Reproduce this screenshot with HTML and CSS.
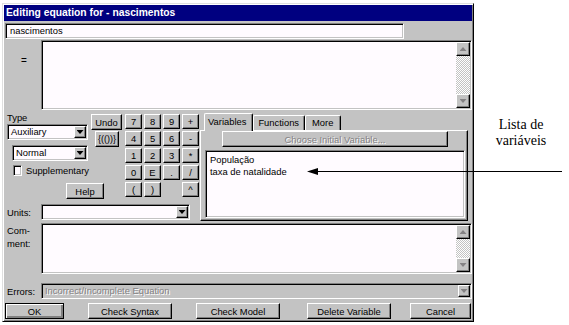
FILE: index.html
```html
<!DOCTYPE html>
<html lang="pt">
  <head>
    <meta charset="UTF-8" />
    <title>Editing equation for - nascimentos</title>
    <link rel="stylesheet" href="styles.css">
  </head>
  <body>
    <div class="page">
      <div class="dialog">
        <div class="titlebar">Editing equation for - nascimentos</div>
        <div class="dialog-body">
          <div class="field name-field">nascimentos</div>
          <!-- equation -->
          <div class="row eq-row">
            <div class="row-label eq-label">=</div>
            <div class="field textbox">
              <div class="scrollbar">
                <span class="sbtn"><i class="tri up"></i></span>
                <span class="sbtn"><i class="tri down"></i></span>
              </div>
            </div>
          </div>
          <!-- type, keypad and tabs -->
          <div class="mid">
            <div class="left">
              <div class="controls">
                <div class="type-col">
                  <div class="type-label">Type</div>
                  <div class="field combo aux">
                    <span class="combo-text">Auxiliary</span>
                    <span class="drop"><i class="tri down dark"></i></span>
                  </div>
                  <div class="field combo normal">
                    <span class="combo-text">Normal</span>
                    <span class="drop"><i class="tri down dark"></i></span>
                  </div>
                  <div class="check-row">
                    <span class="field checkbox"></span>
                    <span>Supplementary</span>
                  </div>
                  <div class="btn help-btn">Help</div>
                </div>
                <div class="undo-col">
                  <div class="btn undo-btn">Undo</div>
                  <div class="btn wrap-btn">{(())}</div>
                </div>
                <div class="keypad">
                  <div class="btn">7</div>
                  <div class="btn">8</div>
                  <div class="btn">9</div>
                  <div class="btn">+</div>
                  <div class="btn">4</div>
                  <div class="btn">5</div>
                  <div class="btn">6</div>
                  <div class="btn">-</div>
                  <div class="btn">1</div>
                  <div class="btn">2</div>
                  <div class="btn">3</div>
                  <div class="btn">*</div>
                  <div class="btn">0</div>
                  <div class="btn">E</div>
                  <div class="btn">.</div>
                  <div class="btn">/</div>
                  <div class="btn">(</div>
                  <div class="btn">)</div>
                  <div></div>
                  <div class="btn">^</div>
                </div>
              </div>
              <div class="row units-row">
                <div class="row-label">Units:</div>
                <div class="field combo units">
                  <span class="combo-text"></span>
                  <span class="drop"><i class="tri down dark"></i></span>
                </div>
              </div>
            </div>
            <div class="tabs">
              <div class="tab-row">
                <div class="tab active">Variables</div>
                <div class="tab">Functions</div>
                <div class="tab tab-more">More</div>
              </div>
              <div class="panel">
                <div class="btn disabled choose-btn">Choose Initial Variable...</div>
                <div class="field listbox">
                  <div>População</div>
                  <div>taxa de natalidade</div>
                </div>
              </div>
            </div>
          </div>
          <!-- comment -->
          <div class="row comment-row">
            <div class="row-label comment-label">Com-<br>ment:</div>
            <div class="field textbox">
              <div class="scrollbar">
                <span class="sbtn"><i class="tri up"></i></span>
                <span class="sbtn"><i class="tri down"></i></span>
              </div>
            </div>
          </div>
          <!-- errors -->
          <div class="row errors-row">
            <div class="row-label">Errors:</div>
            <div class="field combo error-field">
              <span class="combo-text disabled-text">Incorrect/Incomplete Equation</span>
              <span class="drop"><i class="tri down"></i></span>
            </div>
          </div>
          <div class="buttons">
            <div class="btn default-btn ok-btn">OK</div>
            <div class="btn wide-btn syntax-btn">Check Syntax</div>
            <div class="btn wide-btn model-btn">Check Model</div>
            <div class="btn wide-btn delete-btn">Delete Variable</div>
            <div class="btn cancel-btn">Cancel</div>
          </div>
        </div>
      </div>
      <!-- annotation -->
      <div class="note">Lista de<br>variáveis</div>
      <svg class="pointer" width="569" height="325" viewBox="0 0 569 325">
        <line x1="314" y1="171.5" x2="562" y2="171.5" stroke="#000" stroke-width="1" />
        <polygon points="307,171.5 318,168 318,175" fill="#000" />
      </svg>
    </div>
  </body>
</html>
```

FILE: styles.css
```css
body {
  margin: 0;
  background: #fff;
  font-family: "Liberation Sans", Arial, sans-serif;
  font-size: 9.4px;
  color: #000;
}
.page {
  position: relative;
  width: 569px;
  height: 325px;
  padding: 3px 0 0 2px;
  box-sizing: border-box;
}
.dialog {
  width: 472px;
  height: 319px;
  box-sizing: border-box;
  padding: 1px;
  background: #c3c3c3;
  border: 1px solid;
  border-color: #dfdfdf #000 #000 #dfdfdf;
  box-shadow: inset 1px 1px #fff, inset -1px -1px #808080;
}
.titlebar {
  height: 16px;
  line-height: 16px;
  padding-left: 2px;
  background: #000080;
  color: #fff;
  font-weight: bold;
  font-size: 10.3px;
}
.dialog-body {
  padding-left: 1px;
}
/* shared controls */
.field {
  box-sizing: border-box;
  padding: 1px;
  background: #fffbff;
  border: 1px solid;
  border-color: #808080 #fff #fff #808080;
  box-shadow: inset 1px 1px #000, inset -1px -1px #c3c3c3;
}
.btn {
  box-sizing: border-box;
  height: 16px;
  display: flex;
  align-items: center;
  justify-content: center;
  background: #c3c3c3;
  border: 1px solid;
  border-color: #fff #000 #000 #fff;
  box-shadow: inset -1px -1px #808080;
  white-space: nowrap;
}
.disabled,
.disabled-text {
  color: #848284;
  text-shadow: 1px 1px #fff;
}
.tri {
  display: block;
  width: 7px;
  height: 4px;
  background: #848284;
}
.tri.dark {
  background: #000;
}
.tri.down {
  clip-path: polygon(0 0, 100% 0, 50% 100%);
}
.tri.up {
  clip-path: polygon(50% 0, 100% 100%, 0 100%);
}
.row {
  display: flex;
}
.row-label {
  width: 36px;
  flex-shrink: 0;
  padding-left: 2px;
  box-sizing: border-box;
}
/* name and equation */
.name-field {
  margin-top: 2px;
  width: 399px;
  height: 16px;
  line-height: 12px;
  padding: 1px 4px;
}
.eq-row {
  margin-top: 1px;
  height: 70px;
}
.eq-label {
  padding: 15px 0 0 16px;
  font-size: 10px;
}
.textbox {
  flex: 1;
  display: flex;
  justify-content: flex-end;
}
.scrollbar {
  width: 14px;
  display: flex;
  flex-direction: column;
  justify-content: space-between;
  background-color: #fff;
  background-image: repeating-conic-gradient(#c3c3c3 0 25%, #fff 0 50%);
  background-size: 2px 2px;
}
.sbtn {
  box-sizing: border-box;
  height: 14px;
  display: flex;
  align-items: center;
  justify-content: center;
  background: #c3c3c3;
  border: 1px solid;
  border-color: #fff #000 #000 #fff;
  box-shadow: inset -1px -1px #808080;
}
/* middle section */
.mid {
  display: flex;
  margin-top: 2px;
  height: 109px;
}
.left {
  width: 195px;
  flex-shrink: 0;
}
.controls {
  display: flex;
  height: 92px;
}
.type-col {
  width: 84px;
  padding-left: 2px;
  box-sizing: border-box;
}
.type-label {
  height: 12px;
  line-height: 12px;
}
.combo {
  display: flex;
  height: 16px;
}
.combo-text {
  flex: 1;
  line-height: 12px;
  padding-left: 2px;
  white-space: nowrap;
  overflow: hidden;
}
.drop {
  width: 12px;
  display: flex;
  align-items: center;
  justify-content: center;
  box-sizing: border-box;
  background: #c3c3c3;
  border: 1px solid;
  border-color: #fff #000 #000 #fff;
  box-shadow: inset -1px -1px #808080;
}
.aux {
  width: 81px;
}
.normal {
  width: 76px;
  margin: 5px 0 0 5px;
}
.check-row {
  display: flex;
  align-items: center;
  gap: 4px;
  height: 11px;
  margin: 4px 0 0 6px;
}
.checkbox {
  width: 11px;
  height: 11px;
  padding: 0;
}
.help-btn {
  width: 38px;
  margin: 7px 0 0 59px;
}
.undo-col {
  width: 34px;
  flex-shrink: 0;
}
.undo-btn {
  width: 31px;
  margin: 2px 0 0 2px;
}
.wrap-btn {
  width: 24px;
  margin: 1px 0 0 6px;
  font-size: 9px;
}
.keypad {
  display: grid;
  grid-template-columns: repeat(4, 17px);
  grid-auto-rows: 15px;
  gap: 2px;
  margin: 2px 0 0 2px;
}
.keypad .btn {
  height: 15px;
}
.units-row {
  align-items: center;
  height: 16px;
}
.units {
  width: 149px;
}
/* tabs */
.tabs {
  width: 268px;
  display: flex;
  flex-direction: column;
}
.tab-row {
  display: flex;
  align-items: flex-end;
  height: 18px;
  padding-left: 4px;
}
.tab {
  box-sizing: border-box;
  height: 15px;
  line-height: 13px;
  padding: 0 5px 0 4px;
  background: #c3c3c3;
  border: 1px solid;
  border-bottom: none;
  border-color: #fff #000 #000 #fff;
  border-radius: 2px 2px 0 0;
  box-shadow: inset -1px 0 #808080;
}
.tab.active {
  height: 18px;
  line-height: 15px;
  padding: 0 6px 0 3px;
  margin-bottom: -1px;
  position: relative;
  z-index: 1;
}
.tab-more {
  padding: 0 7px 0 6px;
}
.panel {
  flex: 1;
  box-sizing: border-box;
  border: 1px solid;
  border-color: #fff #000 #000 #fff;
  box-shadow: inset -1px -1px #808080;
}
.choose-btn {
  width: 226px;
  margin-left: 21px;
}
.listbox {
  width: 260px;
  height: 68px;
  margin: 3px 0 0 4px;
  padding: 3px 4px;
  line-height: 12px;
}
/* comment and errors */
.comment-row {
  margin-top: 2px;
  height: 51px;
}
.comment-label {
  padding-top: 1px;
  line-height: 13px;
}
.errors-row {
  margin-top: 9px;
  height: 16px;
  align-items: center;
}
.error-field {
  flex: 1;
  background: #c3c3c3;
}
/* bottom buttons */
.buttons {
  display: flex;
  margin-top: 4px;
}
.wide-btn {
  width: 84px;
}
.default-btn {
  width: 59px;
  border-color: #000;
  box-shadow: inset 1px 1px #fff, inset -2px -2px #808080;
}
.syntax-btn {
  margin-left: 24px;
}
.model-btn {
  margin-left: 24px;
}
.delete-btn {
  margin-left: 27px;
}
.cancel-btn {
  width: 61px;
  margin-left: 19px;
}
/* annotation outside the dialog */
.note {
  position: absolute;
  left: 489px;
  top: 117px;
  width: 64px;
  text-align: center;
  font-family: "Liberation Serif", "Times New Roman", serif;
  font-size: 14px;
  line-height: 16px;
}
.pointer {
  position: absolute;
  left: 0;
  top: 0;
  pointer-events: none;
}
```
